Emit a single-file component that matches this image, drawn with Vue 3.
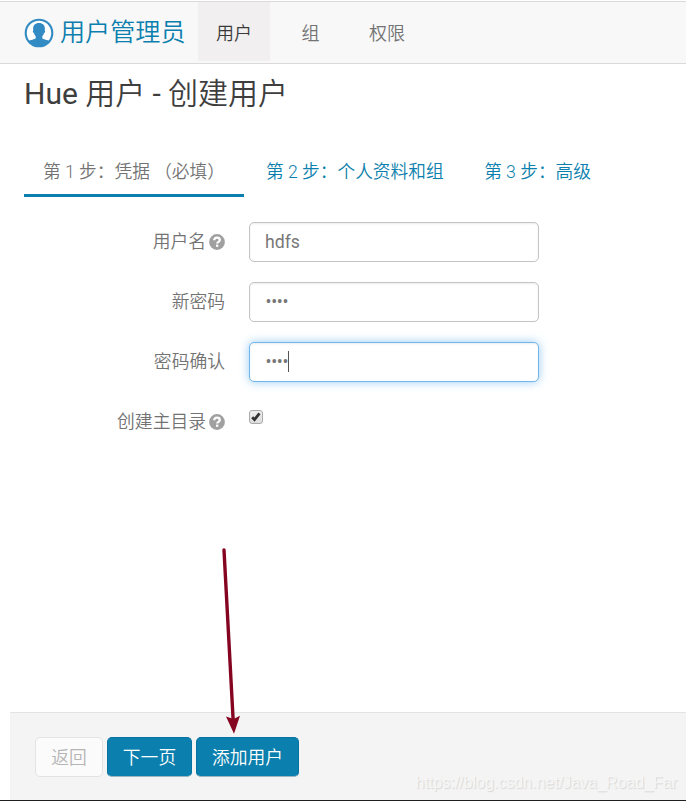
<script setup>
const navItems = [
  { label: '用户', active: true },
  { label: '组', active: false },
  { label: '权限', active: false },
]

const steps = [
  { label: '第 1 步：凭据 （必填）', active: true },
  { label: '第 2 步：个人资料和组', active: false },
  { label: '第 3 步：高级', active: false },
]

const fields = [
  { label: '用户名', help: true, value: 'hdfs', type: 'text' },
  { label: '新密码', help: false, value: '••••', type: 'password' },
  { label: '密码确认', help: false, value: '••••', type: 'password', focused: true },
  { label: '创建主目录', help: true, type: 'checkbox' },
]
</script>

<template>
  <div class="page">
    <header class="navbar">
      <div class="brand">
        <svg class="brand-icon" viewBox="0 0 30 30">
          <circle cx="15" cy="15" r="13.300" fill="#fff" stroke="#338bc4" stroke-width="2.100" />
          <path
            d="M15 5c-3.900 0-5.900 2.300-5.900 5.700 0 .7.100 1.200.2 1.700-.5.200-.6.900-.3 1.700.2.700.6 1.100 1 1.200.3 1.200 1 2.200 1.700 2.900v2c-.9 1.300-5 1.400-8 3.100A13 13 0 0 0 15 28.200a13 13 0 0 0 11.300-4.900c-3-1.700-7.100-1.800-8-3.100v-2c.7-.7 1.400-1.700 1.700-2.900.4-.1.800-.5 1-1.200.3-.8.200-1.500-.3-1.700.1-.5.200-1 .2-1.700 0-3.400-2-5.700-5.900-5.700z"
            fill="#338bc4"
          />
        </svg>
        <span class="brand-text">用户管理员</span>
      </div>
      <nav class="nav">
        <a v-for="item in navItems" :key="item.label" class="nav-item" :class="{ active: item.active }">{{ item.label }}</a>
      </nav>
    </header>

    <main class="content">
      <h1 class="title"><span class="product">Hue</span> 用户 <span class="product">-</span> 创建用户</h1>

      <div class="steps">
        <a v-for="step in steps" :key="step.label" class="step" :class="{ active: step.active }">{{ step.label }}</a>
      </div>

      <form class="form">
        <div v-for="field in fields" :key="field.label" class="row">
          <label class="label">
            <span>{{ field.label }}</span>
            <svg v-if="field.help" class="help" viewBox="0 0 16 16">
              <circle cx="8" cy="8" r="7.900" fill="#a0a0a0" />
              <path d="M5.200 6.200C5.300 4.600 6.400 3.700 8 3.700c1.600 0 2.800.9 2.800 2.300 0 1.800-2.600 1.800-2.600 3.600" fill="none" stroke="#fff" stroke-width="2.200" />
              <rect x="7" y="10.600" width="2.300" height="2.200" fill="#fff" />
            </svg>
          </label>
          <span v-if="field.type === 'checkbox'" class="checkbox">
            <svg viewBox="0 0 12 12">
              <path d="M2.200 6.300l2.300 2.300 5-6.300" fill="none" stroke="#333" stroke-width="2.700" />
            </svg>
          </span>
          <div v-else class="input" :class="{ focused: field.focused, password: field.type === 'password' }">
            <span>{{ field.value }}</span>
            <i v-if="field.focused" class="caret"></i>
          </div>
        </div>
      </form>
    </main>

    <footer class="actions">
      <button class="btn disabled">返回</button>
      <button class="btn primary next">下一页</button>
      <button class="btn primary add">添加用户</button>
    </footer>

    <svg class="arrow" viewBox="0 0 30 190">
      <path d="M9 5L18.200 176" stroke="#850420" stroke-width="3.400" stroke-linecap="round" />
      <path d="M11 171.500l7.500 2.500 6.500-3.300L19 188.700z" fill="#850420" />
    </svg>
    <span class="watermark">https://blog.csdn.net/Java_Road_Far</span>
  </div>
</template>

<style>
body {
  background: #fff;
  overflow: hidden;
}
</style>

<style scoped>
.page {
  position: relative;
  box-sizing: border-box;
  display: flex;
  flex-direction: column;
  width: 686px;
  height: 801px;
  border-bottom: 1px solid #202020;
  font-family: Roboto, "Noto Sans CJK SC", sans-serif;
  font-size: 17.800px;
  font-weight: 350;
  color: #737373;
  text-spacing-trim: space-all;
}

.navbar {
  box-sizing: border-box;
  display: flex;
  flex: none;
  height: 63px;
  margin-top: 1px;
  padding-left: 24px;
  background: #f8f8f8;
  border-top: 1px solid #dadada;
  border-bottom: 1px solid #dadada;
}

.brand {
  display: flex;
  width: 174px;
  padding-top: 16px;
}

.brand-icon {
  width: 30px;
  height: 30px;
  flex: none;
}

.brand-text {
  margin-left: 6px;
  font-size: 25.100px;
  line-height: 29px;
  color: #0b7fad;
  white-space: nowrap;
}

.nav {
  display: flex;
  gap: 8px;
}

.nav-item {
  height: 59px;
  padding: 0 18px;
  line-height: 63px;
  font-size: 18px;
}

.nav-item:nth-child(2) {
  padding: 0 23.500px;
}

.nav-item.active {
  background: #f1eff0;
  color: #3a3a3a;
}

.content {
  flex: 1;
  padding-left: 24px;
}

.title {
  margin: 0;
  height: 82px;
  font-size: 30px;
  font-weight: 350;
  line-height: 60px;
  color: #3e3e3e;
}

.product {
  font-weight: 400;
}

.steps {
  display: flex;
  gap: 2px;
}

.step {
  box-sizing: border-box;
  height: 51px;
  padding: 0 20px;
  font-size: 17.700px;
  line-height: 53px;
  color: #0b7fad;
  white-space: nowrap;
}

.step + .step + .step {
  padding-left: 18.500px;
}

.step.active {
  width: 220px;
  padding-left: 19px;
  border-bottom: 3px solid #0b7fad;
  color: #737373;
}

.form {
  display: grid;
  gap: 20px;
  padding-top: 25px;
}

.row {
  display: flex;
  height: 40px;
}

.label {
  display: flex;
  align-items: center;
  justify-content: flex-end;
  gap: 3px;
  width: 201px;
  margin-right: 24px;
  line-height: 40px;
}

.help {
  width: 16px;
  height: 16px;
}

.input {
  box-sizing: border-box;
  display: flex;
  align-items: center;
  width: 290px;
  height: 40px;
  padding: 0 0 1px 15px;
  border: 1px solid #c4c4c4;
  border-radius: 5px;
  background: #fff;
  box-shadow: inset 0 1px 2px rgba(0, 0, 0, 0.08);
  font-size: 17.700px;
  font-weight: 400;
  color: #777;
}

.password {
  padding-left: 15.500px;
  letter-spacing: -0.300px;
}

.input.focused {
  border-color: #72b7ec;
  box-shadow: inset 0 1px 2px rgba(0, 0, 0, 0.08), 0 0 10px rgba(82, 168, 236, 0.6);
}

.caret {
  width: 1px;
  height: 21px;
  background: #555;
}

.checkbox {
  box-sizing: border-box;
  width: 14px;
  height: 14px;
  margin-top: 8px;
  border: 1px solid #aaa;
  border-radius: 3px;
  background: linear-gradient(#eee, #dedede);
}

.checkbox svg {
  display: block;
  width: 12px;
  height: 12px;
}

.actions {
  box-sizing: border-box;
  display: flex;
  flex: none;
  gap: 4px;
  height: 88px;
  margin-left: 10px;
  padding: 24px 0 0 25px;
  border-top: 1px solid #e3e3e3;
  background: #f4f4f4;
}

.btn {
  box-sizing: border-box;
  height: 40px;
  padding: 2px 0 0;
  border: 1px solid #0872a0;
  border-bottom-color: #9fb5bf;
  border-radius: 5px;
  font: inherit;
  line-height: 36px;
  white-space: nowrap;
}

.disabled {
  width: 68px;
  background: #fbfbfb;
  border-color: #e3e3e3;
  color: #b5b5b5;
}

.primary {
  background: #0b7fad;
  color: #fff;
}

.next {
  width: 85px;
}

.add {
  width: 103px;
}

.arrow {
  position: absolute;
  left: 215px;
  top: 545px;
  width: 30px;
  height: 190px;
  fill: none;
}

.watermark {
  position: absolute;
  right: 9px;
  bottom: 8px;
  font-family: "Liberation Sans", sans-serif;
  font-size: 16px;
  font-weight: 400;
  line-height: 18px;
  color: #f6f6f6;
  text-shadow: 1px 1px 1px #d6d6d6;
}
</style>
